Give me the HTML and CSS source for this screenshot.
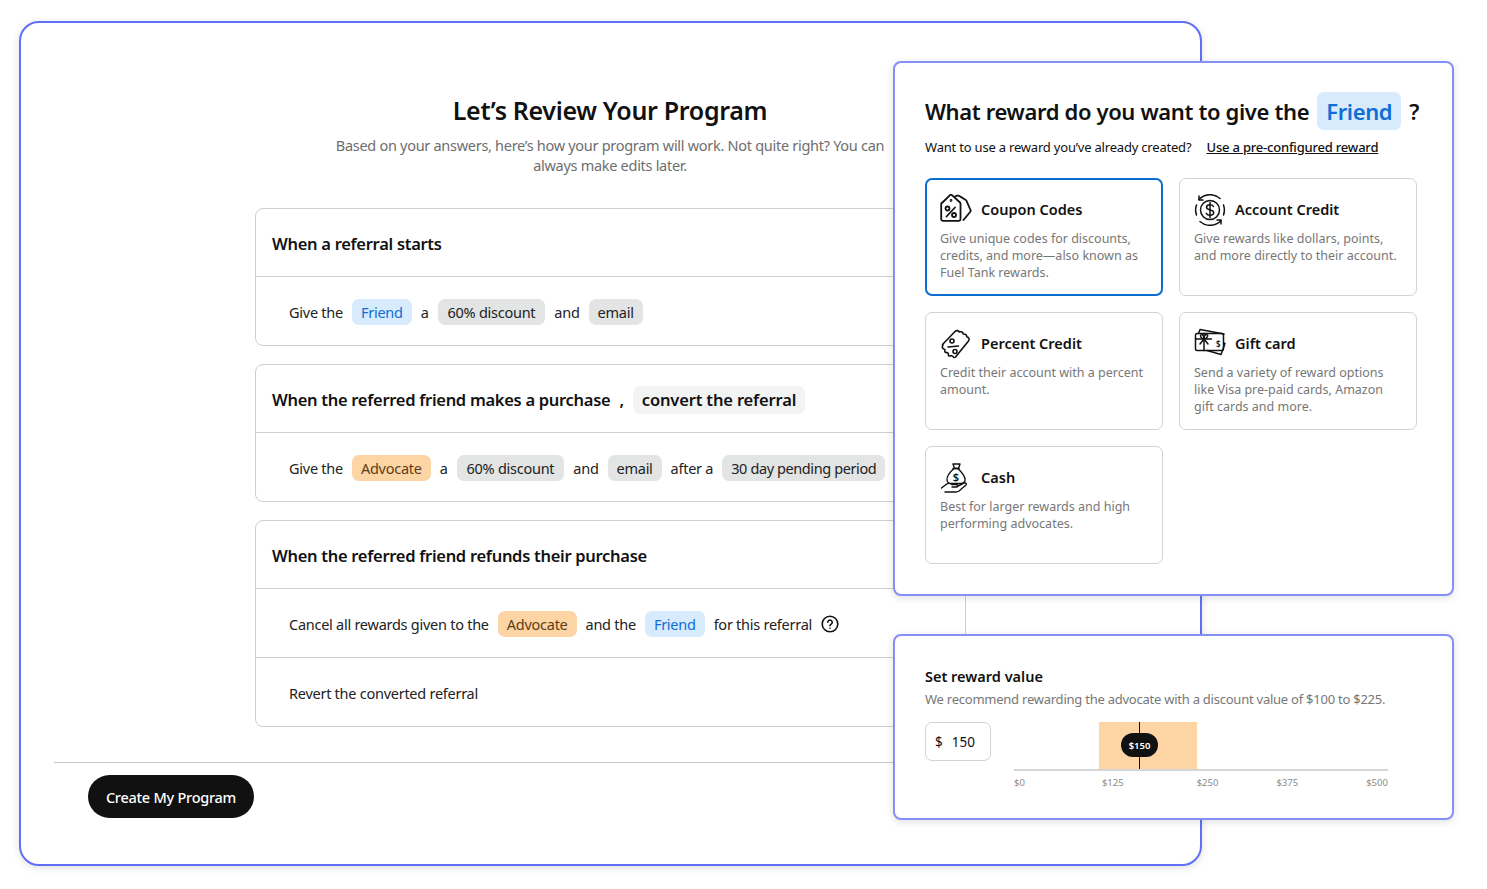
FILE: index.html
```html
<!DOCTYPE html>
<html lang="en">
<head>
    <meta charset="UTF-8">
    <meta name="viewport" content="width=device-width, initial-scale=1.0">
    <title>Review Your Program</title>
    <link rel="stylesheet" href="styles.css">
</head>
<body>

    <div class="canvas">

        <div class="window main-window">
            <h1>Let’s Review Your Program</h1>
            <p class="subtitle">Based on your answers, here’s how your program will work. Not quite right? You can always make edits later.</p>

            <div class="review-card">
                <div class="review-head">When a referral starts</div>
                <div class="review-row">
                    Give the <span class="chip chip-friend">Friend</span> a <span class="chip chip-discount">60% discount</span> and <span class="chip">email</span>
                </div>
            </div>

            <div class="review-card">
                <div class="review-head">
                    When the referred friend makes a purchase <span class="comma">,</span> <span class="chip chip-soft">convert the referral</span>
                </div>
                <div class="review-row">
                    Give the <span class="chip chip-advocate">Advocate</span> a <span class="chip chip-discount">60% discount</span> and <span class="chip">email</span> after a <span class="chip chip-period">30 day pending period</span>
                </div>
            </div>

            <div class="review-card">
                <div class="review-head">When the referred friend refunds their purchase</div>
                <div class="review-row">
                    Cancel all rewards given to the <span class="chip chip-advocate">Advocate</span> and the <span class="chip chip-friend">Friend</span> for this referral
                    <svg class="help-icon" viewBox="0 0 18 18" width="18" height="18" fill="none" stroke="#111" stroke-width="1.6" stroke-linecap="round">
                        <circle cx="9" cy="9" r="7.8"/>
                        <path d="M6.8 7.2a2.2 2.2 0 1 1 3.4 1.9c-.8.5-1.2.9-1.2 1.7"/>
                        <path d="M9 13.2v.1"/>
                    </svg>
                </div>
                <div class="review-row">Revert the converted referral</div>
            </div>

            <div class="footer-bar">
                <button type="button" class="create-btn">Create My Program</button>
            </div>
        </div>

        <div class="window reward-window">
            <h2><span>What reward do you want to give the</span><span class="chip-big">Friend</span><span>?</span></h2>
            <p class="reward-hint">Want to use a reward you’ve already created? <a href="#">Use a pre-configured reward</a></p>

            <div class="option-grid">
                <div class="option selected">
                    <div class="option-title">
                        <svg viewBox="0 0 32 32" width="32" height="32" fill="none" stroke="#111" stroke-width="1.800" stroke-linejoin="round" stroke-linecap="round">
                            <path d="M2.500 8.500 10 1.200a1.500 1.500 0 0 1 2 0l8 7.300a1.500 1.500 0 0 1 .5 1.200V25a1.800 1.800 0 0 1-1.800 1.800H3A1.800 1.800 0 0 1 1.200 25V9.700a1.500 1.500 0 0 1 1.300-1.200z"/>
                            <path d="M15 2.500l2-.8a2 2 0 0 1 1.800.1l3.700 2.100 3 1.800c.4.300.7.600.9 1L30.500 16c.3.600.2 1.300-.2 1.800L23.500 26"/>
                            <circle cx="11" cy="6.500" r=".5"/>
                            <path d="M6.500 22.500l8.500-9"/>
                            <circle cx="7.500" cy="14.500" r="2"/>
                            <circle cx="14" cy="21" r="2"/>
                        </svg>
                        Coupon Codes
                    </div>
                    <p>Give unique codes for discounts, credits, and more—also known as Fuel Tank rewards.</p>
                </div>
                <div class="option">
                    <div class="option-title">
                        <svg viewBox="0 0 32 32" width="32" height="32" fill="none" stroke="#111" stroke-width="1.500" stroke-linecap="round" stroke-linejoin="round">
                            <circle cx="16" cy="16" r="9.500"/>
                            <path d="M19.500 12.500c-.6-1.200-2-1.800-3.500-1.800-2 0-3.500 1-3.500 2.600 0 3.500 7.200 1.800 7.200 5.300 0 1.600-1.600 2.700-3.700 2.700-1.600 0-3-.7-3.700-2"/>
                            <path d="M16 8.500v15"/>
                            <path d="M5 5.500a15 15 0 0 1 21-1"/>
                            <path d="M5 2v4h4"/>
                            <path d="M27 26.500a15 15 0 0 1-21 1"/>
                            <path d="M27 30v-4h-4"/>
                            <path d="M2.500 11a15 15 0 0 0 0 10"/>
                            <path d="M29.500 11a15 15 0 0 1 0 10"/>
                        </svg>
                        Account Credit
                    </div>
                    <p>Give rewards like dollars, points, and more directly to their account.</p>
                </div>
                <div class="option">
                    <div class="option-title">
                        <svg viewBox="0 0 32 32" width="32" height="32" fill="none" stroke="#111" stroke-width="1.600" stroke-linecap="round" stroke-linejoin="round">
                            <path d="M2.500 16.500 15 3.500c1.500-1.500 3.500-1 4.300.5 1.800-.8 3.700.2 4 2 2-.2 3.500 1 3.500 2.800 2 .4 3 2.500 1.700 4.200L15.500 29c-1 1-2 .5-2.500-.5-.5-1-2-1-3-.5-1 .3-2-.7-1.700-1.700.3-1-.7-2-1.700-1.700-1 .3-2-.7-1.700-1.700.3-1-.5-2-1.500-2.200-1.200-.5-1.500-2.500-.4-3.700z"/>
                            <path d="M8 19l10.500-1"/>
                            <circle cx="12" cy="13" r="2"/>
                            <circle cx="15" cy="23.500" r="2"/>
                        </svg>
                        Percent Credit
                    </div>
                    <p>Credit their account with a percent amount.</p>
                </div>
                <div class="option">
                    <div class="option-title">
                        <svg viewBox="0 0 32 32" width="32" height="32" fill="none" stroke="#111" stroke-width="1.500" stroke-linecap="round" stroke-linejoin="round">
                            <path d="M4.500 5.500 6 1.500 30 6"/>
                            <rect x="1.500" y="5.500" width="28" height="17" rx="1.500"/>
                            <path d="M10 5.500v17"/>
                            <path d="M1.500 11h16"/>
                            <path d="M10 11c-3-.7-4.300-3-3-4.200 1.500-1 3 1.200 3 4.200 0-3 1.600-5.200 3.200-4.200 1.300 1.200 0 3.500-3.200 4.200z"/>
                            <path d="M10 11l-4 5"/>
                            <path d="M10 11l4 5"/>
                            <path d="M13 22.500l14 4 4-11-1.500-.5"/>
                            <text x="22" y="18.500" class="icon-dollar">$</text>
                        </svg>
                        Gift card
                    </div>
                    <p>Send a variety of reward options like Visa pre-paid cards, Amazon gift cards and more.</p>
                </div>
                <div class="option">
                    <div class="option-title">
                        <svg viewBox="0 0 32 32" width="32" height="32" fill="none" stroke="#111" stroke-width="1.400" stroke-linecap="round" stroke-linejoin="round">
                            <path d="M13 2h7l-1.500 4.500h-4z"/>
                            <path d="M13 6.500h6"/>
                            <path d="M14 6.500C10 10 6.500 14 7 18c.3 2 2 3.500 4 3.500h10c2.500 0 4.500-2 4-4.500-.5-4-4-7.500-7-10.500"/>
                            <path d="M1.500 26 6 22.500c2-1.500 4-1.500 6 0h4.500c1.500 0 1.500 2.500 0 2.500H12"/>
                            <path d="M17 24.500l7-3.500c1.500-.6 3 .8 2 2L19 29c-1 .8-2 1-3 1H5"/>
                            <text x="12.800" y="18.500" class="icon-dollar-big">$</text>
                        </svg>
                        Cash
                    </div>
                    <p>Best for larger rewards and high performing advocates.</p>
                </div>
            </div>
        </div>

        <div class="window value-window">
            <div class="value-title">Set reward value</div>
            <p class="value-hint">We recommend rewarding the advocate with a discount value of $100 to $225.</p>

            <div class="value-body">
                <div class="value-input"><span>$</span><span>150</span></div>
                <div class="chart">
                    <div class="chart-plot">
                        <div class="chart-range"></div>
                        <div class="chart-marker"></div>
                        <div class="chart-badge">$150</div>
                    </div>
                    <div class="chart-labels">
                        <span>$0</span>
                        <span>$125</span>
                        <span>$250</span>
                        <span>$375</span>
                        <span>$500</span>
                    </div>
                </div>
            </div>
        </div>

    </div>

</body>
</html>
```

FILE: styles.css
```css
* {
    box-sizing: border-box;
}
body {
    margin: 0;
    background-color: white;
    font-family: "Noto Sans", Arial, sans-serif;
    color: #111;
}
.canvas {
    position: relative;
    width: 1487px;
    height: 889px;
    overflow: hidden;
}
.window {
    position: absolute;
    background: white;
    border: 2px solid #5f6ff7;
    box-shadow: 0 2px 8px rgba(0, 0, 0, 0.12);
}
.main-window {
    left: 19px;
    top: 21px;
    width: 1183px;
    height: 845px;
    border-radius: 20px;
    padding: 70px 235px 0 234px;
}
.reward-window {
    left: 893px;
    top: 61px;
    width: 561px;
    height: 535px;
    border-color: #8490f6;
    border-radius: 8px;
    padding: 29px 30px 0 30px;
}
.value-window {
    left: 893px;
    top: 634px;
    width: 561px;
    height: 186px;
    border-color: #8490f6;
    border-radius: 8px;
    padding: 30px 30px 0 30px;
}
h1 {
    margin: 0;
    font-size: 25px;
    line-height: 34px;
    font-weight: 600;
    letter-spacing: -0.33px;
    text-align: center;
}
.subtitle {
    width: 580px;
    margin: 8px auto 0;
    font-size: 14.500px;
    line-height: 20px;
    letter-spacing: -0.29px;
    color: #6e6e6e;
    text-align: center;
}
.review-card {
    width: 711px;
    margin-top: 18px;
    border: 1px solid #cfcfd2;
    border-radius: 8px;
}
.subtitle + .review-card {
    margin-top: 33px;
}
.review-head {
    display: flex;
    align-items: center;
    gap: 9px;
    height: 67px;
    padding: 2px 0 0 16px;
    font-size: 16.500px;
    font-weight: 600;
    letter-spacing: -0.29px;
}
.review-row {
    display: flex;
    align-items: center;
    gap: 9px;
    height: 69px;
    padding: 2px 0 0 33px;
    border-top: 1px solid #cfcfd2;
    font-size: 14.500px;
    letter-spacing: -0.26px;
    color: #222;
}
.chip {
    display: inline-block;
    padding: 0 9px;
    line-height: 26px;
    border-radius: 7px;
    background-color: #e3e4e4;
    font-weight: 400;
}
.chip-discount {
    padding: 0 10px;
}
.chip-period {
    letter-spacing: -0.4px;
}
.chip-friend {
    background-color: #d7ebfd;
    color: #0f6fd6;
}
.chip-advocate {
    background-color: #fdd5a5;
    color: #5c3d17;
}
.chip-soft {
    background-color: #f2f3f3;
    font-size: 16.500px;
    font-weight: 600;
    line-height: 28px;
    letter-spacing: -0.15px;
}
.help-icon {
    flex-shrink: 0;
}
.footer-bar {
    width: 1113px;
    margin: 35px 0 0 -201px;
    padding: 12px 0 0 34px;
    border-top: 1px solid #c9c9c9;
}
.create-btn {
    width: 166px;
    height: 43px;
    padding: 0;
    border: none;
    border-radius: 22px;
    background-color: #111;
    color: white;
    font-family: inherit;
    font-size: 14.500px;
    font-weight: 500;
    letter-spacing: -0.25px;
}
h2 {
    display: flex;
    align-items: center;
    gap: 8px;
    margin: 0;
    font-size: 22px;
    line-height: 38px;
    font-weight: 600;
    letter-spacing: -0.36px;
    white-space: nowrap;
}
.chip-big {
    padding: 0 9px;
    border-radius: 7px;
    background-color: #d7ebfd;
    color: #0f6fd6;
}
.reward-hint {
    margin: 8px 0 0 0;
    font-size: 13px;
    line-height: 18px;
    letter-spacing: -0.2px;
}
.reward-hint a {
    margin-left: 12px;
    color: #111;
    font-weight: 500;
}
.option-grid {
    display: grid;
    grid-template-columns: 238px 238px;
    grid-auto-rows: 118px;
    gap: 16px;
    margin-top: 22px;
}
.option {
    padding: 14px 14px 0 14px;
    border: 1px solid #d2d2d4;
    border-radius: 7px;
}
.option.selected {
    border: 2px solid #0a6ed1;
    padding: 13px 13px 0 13px;
}
.option-title {
    display: flex;
    align-items: center;
    gap: 9px;
    height: 32px;
    font-size: 14.500px;
    font-weight: 600;
}
.option-title svg {
    margin-top: 2px;
}
.option p {
    margin: 5px 0 0 0;
    font-size: 12.500px;
    line-height: 17px;
    color: #777;
}
.icon-dollar {
    fill: #111;
    stroke: none;
    font-size: 8px;
    font-weight: 600;
}
.icon-dollar-big {
    fill: #111;
    stroke: none;
    font-size: 11px;
    font-weight: 600;
}
.value-title {
    font-size: 14.500px;
    line-height: 20px;
    font-weight: 600;
}
.value-hint {
    margin: 3px 0 0 0;
    font-size: 13px;
    line-height: 20px;
    letter-spacing: -0.24px;
    color: #777;
}
.value-body {
    display: flex;
    gap: 23px;
    margin-top: 13px;
}
.value-input {
    display: flex;
    align-items: center;
    gap: 9px;
    width: 66px;
    height: 39px;
    padding-left: 9px;
    border: 1px solid #d2d2d4;
    border-radius: 7px;
    font-size: 13.500px;
}
.chart {
    width: 374px;
}
.chart-plot {
    position: relative;
    height: 49px;
    border-bottom: 2px solid #d5d5d7;
}
.chart-range {
    position: absolute;
    left: 85px;
    top: 0;
    bottom: 0;
    width: 98px;
    background-color: #fdd5a5;
}
.chart-marker {
    position: absolute;
    left: 125px;
    top: 0;
    bottom: 0;
    width: 1px;
    background-color: #111;
}
.chart-badge {
    position: absolute;
    left: 107px;
    top: 11px;
    width: 37px;
    height: 24px;
    border-radius: 12px;
    background-color: #111;
    color: white;
    font-size: 9.500px;
    font-weight: 600;
    line-height: 25px;
    text-align: center;
}
.chart-labels {
    display: flex;
    margin-top: 6px;
    font-size: 9.500px;
    line-height: 12px;
    color: #8a8a8a;
}
.chart-labels span:nth-child(2) {
    margin-left: 77px;
}
.chart-labels span:nth-child(3) {
    margin-left: 73px;
}
.chart-labels span:nth-child(4) {
    margin-left: 58px;
}
.chart-labels span:nth-child(5) {
    margin-left: 68px;
}
```
